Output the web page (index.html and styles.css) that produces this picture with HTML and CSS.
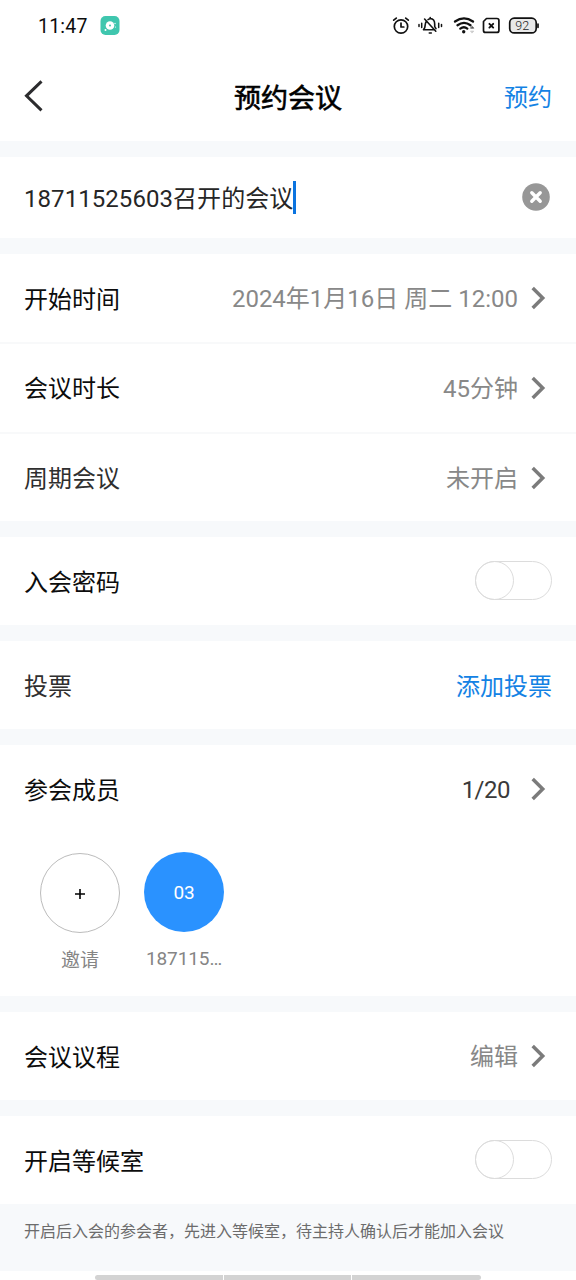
FILE: index.html
```html
<!DOCTYPE html>
<html lang="zh-CN">
<head>
<meta charset="utf-8">
<title>预约会议</title>
<link rel="stylesheet" href="styles.css">
</head>
<body>
<div class="screen">
  <div class="status">
    <span class="clock">11:47</span>
    <svg class="app" width="20" height="20" viewBox="0 0 20 20"><rect x="0.5" y="0" width="19" height="19" rx="5" fill="#3fc6ae"/><circle cx="10" cy="9.500" r="4.300" fill="#fff"/><circle cx="10" cy="9.500" r="1" fill="#3fc6ae"/><circle cx="5.500" cy="14" r="1" fill="#fff"/><circle cx="15" cy="7.500" r="0.700" fill="#fff"/><circle cx="15.500" cy="11" r="0.600" fill="#fff"/></svg>
    <svg class="tray" width="152" height="24" viewBox="390 14 152 24" fill="none" stroke="#111" stroke-width="1.7" stroke-linecap="round" stroke-linejoin="round">
      <circle cx="401" cy="26.5" r="6.7"/>
      <path d="M401 23v4h2.8M393.7 20.2l2.6-2.1M408.300 20.200l-2.600-2.100"/>
      <path d="M426.200 21.500c-1.200 1.800-.9 4.500-1.500 6.300l-1.200 1.900h11.200M428 19.600l2.200-1.100c3.300.2 4.500 3.200 4.500 5.700v2.400l1.300 2M424.600 19l11.200 12.200M430.200 17.500v1M429.300 33h2" stroke-width="1.600"/>
      <path d="M419 24.500v2M421.700 23.300v4.300M438.700 23.300v4.300M441.500 24.500v2" stroke-width="1.500"/>
      <path d="M455 21.500q9-6.200 18 0M457.500 25.200q6.500-4.600 13 0M460.300 28.600q3.700-2.600 7 0" stroke-width="2.300"/>
      <circle cx="463.700" cy="31.800" r="1.700" fill="#111" stroke="none"/>
      <path d="M472.300 26.500l1.500 1.700h-3z" fill="#555" stroke="#555" stroke-width=".8"/>
      <path d="M472.300 32.800l1.500-1.700h-3z" fill="#ccc" stroke="#ccc" stroke-width=".8"/>
      <path d="M486.500 18.500h10.400q2 0 2 2v9.900q0 2-2 2h-11.400q-2 0-2-2v-8.900z"/>
      <path d="M489.400 23.800l3.800 3.800M493.200 23.800l-3.800 3.800" stroke-width="1.900"/>
      <rect x="509.700" y="18.200" width="26.500" height="14.700" rx="4.500" fill="#e9e9e9"/>
      <path d="M538 24v3.300"/>
      <text x="522.300" y="29.800" text-anchor="middle" class="battery">92</text>
    </svg>
  </div>
  <header class="nav">
    <svg class="back" width="20" height="34" viewBox="0 0 20 34"><path d="M17.500 2.300L2.500 16.800l15 14.500" fill="none" stroke="#2c2c2e" stroke-width="3"/></svg>
    <h1 class="title">预约会议</h1>
    <span class="link">预约</span>
  </header>
  <section class="card row name">
    <span class="input"><span class="entry">18711525603召开的会议</span></span>
    <svg class="clear" width="28" height="28" viewBox="0 0 28 28"><circle cx="14" cy="14" r="13.800" fill="#979797"/><path d="M9.800 9.800l8.400 8.400M18.200 9.800l-8.400 8.400" stroke="#fff" stroke-width="3.400" stroke-linecap="round"/></svg>
  </section>
  <section class="card">
    <div class="row"><span class="label">开始时间</span><span class="value">2024年1月16日 周二 12:00</span><svg class="chev" width="15" height="24" viewBox="0 0 15 24"><path d="M1.500 2L11.500 12 1.500 22"/></svg></div>
    <div class="row line"><span class="label">会议时长</span><span class="value">45分钟</span><svg class="chev" width="15" height="24" viewBox="0 0 15 24"><path d="M1.500 2L11.500 12 1.500 22"/></svg></div>
    <div class="row line"><span class="label soft">周期会议</span><span class="value">未开启</span><svg class="chev" width="15" height="24" viewBox="0 0 15 24"><path d="M1.500 2L11.500 12 1.500 22"/></svg></div>
  </section>
  <section class="card row"><span class="label">入会密码</span><span class="switch"></span></section>
  <section class="card row"><span class="label soft">投票</span><span class="link">添加投票</span></section>
  <section class="card members">
    <div class="row"><span class="label">参会成员</span><span class="value count">1/20</span><svg class="chev" width="15" height="24" viewBox="0 0 15 24"><path d="M1.500 2L11.500 12 1.500 22"/></svg></div>
    <div class="people">
      <div class="person"><div class="avatar add"><svg width="12" height="12" viewBox="0 0 12 12"><path d="M6 1v10M1 6h10" stroke="#000" stroke-width="1.600"/></svg></div><span class="caption">邀请</span></div>
      <div class="person"><div class="avatar">03</div><span>187115…</span></div>
    </div>
  </section>
  <section class="card row"><span class="label">会议议程</span><span class="value">编辑</span><svg class="chev" width="15" height="24" viewBox="0 0 15 24"><path d="M1.500 2L11.500 12 1.500 22"/></svg></section>
  <section class="card row"><span class="label">开启等候室</span><span class="switch"></span></section>
  <p class="hint">开启后入会的参会者，先进入等候室，待主持人确认后才能加入会议</p>
  <footer class="gesture"><i></i><i></i><i></i></footer>
</div>
</body>
</html>
```
FILE: styles.css
```css
*, *::before { box-sizing: border-box; }
body { margin: 0; background: #f7f9fb; }
.screen {
  width: 576px; height: 1280px; overflow: hidden;
  display: flex; flex-direction: column;
  font: 24px/36px Roboto, "Noto Sans CJK SC", sans-serif; color: #0c0c0c;
}
.status { flex: none; height: 52px; background: #fff; display: flex; align-items: center; padding: 0 34px 0 38px; }
.clock { font-size: 19.500px; letter-spacing: .2px; width: 62px; line-height: 52px; padding-top: 1px; }
.tray { margin-left: auto; }
.battery { font: 300 12.500px Roboto, sans-serif; fill: #222; stroke: none; }
.nav {
  flex: none; height: 89px; background: #fff; margin-bottom: 16px; padding: 0 24px;
  display: grid; grid-template-columns: 60px 1fr 60px; align-items: center;
}
.back { margin-top: -2px; }
.title { margin: 0; padding-top: 4px; font-size: 27px; font-weight: 400; -webkit-text-stroke: .6px #000; text-align: center; color: #000; }
.link { color: #1382e4; margin-left: auto; padding-top: 3px; }
.card { flex: none; background: #fff; margin-bottom: 16px; }
.row { display: flex; align-items: center; height: 88px; padding: 0 24px; white-space: pre; }
.row.name { height: 81px; padding-right: 26px; justify-content: space-between; }
.input { display: flex; align-items: center; height: 33px; color: #262626; border-right: 3px solid #0b74e0; }
.entry { padding-top: 3px; letter-spacing: .06px; }
.clear { margin-top: -2px; }
.line { height: 90px; border-top: 2px solid #f8f9fa; }
.line + .line { height: 89px; }
.label { padding-top: 3px; }
.line .label { padding-top: 2px; }
.soft { color: #2f2f2f; }
.value { margin-left: auto; padding-top: 2px; color: #888; }
.count { color: #3a3a3a; margin-right: 8px; letter-spacing: -.5px; }
.chev { margin: 0 6px 0 13px; fill: none; stroke: #7b7b7b; stroke-width: 3.500px; }
.chev path { transform: translateX(.2px); }
.switch { width: 77px; height: 39px; margin-left: auto; margin-top: -1px; border: 1px solid #dcdcdc; border-radius: 20px; }
.switch::before { content: ""; display: block; width: 39px; height: 39px; margin: -1px 0 0 -1px; border: 1px solid #dcdcdc; border-radius: 50%; }
.members { height: 251px; }
.people { display: flex; gap: 24px; padding: 19px 40px 0; }
.person { width: 80px; text-align: center; font-size: 19px; line-height: 28px; color: #858585; letter-spacing: -.1px; }
.caption { display: block; padding-top: 2px; }
.avatar { width: 80px; height: 80px; margin-bottom: 13px; border-radius: 50%; background: #2a92ff; color: #fff; display: flex; align-items: center; justify-content: center; padding-top: 1px; }
.add { background: #fff; border: 1px solid #bcbcbc; margin: 1px 0 12px; }
.hint { flex: 1; margin: -16px 0 0; padding: 15px 24px 0; font-size: 16px; line-height: 26px; color: #6c6c6c; }
.gesture { flex: none; height: 9px; background: #fff; display: grid; grid-template-columns: 128px 127px 129px; gap: 1px; justify-content: center; align-items: end; }
.gesture i { height: 5px; background: #d3d3d3; }
.gesture i:first-child { border-top-left-radius: 3px; border-bottom-left-radius: 3px; }
.gesture i:last-child { border-top-right-radius: 3px; border-bottom-right-radius: 3px; }
```
